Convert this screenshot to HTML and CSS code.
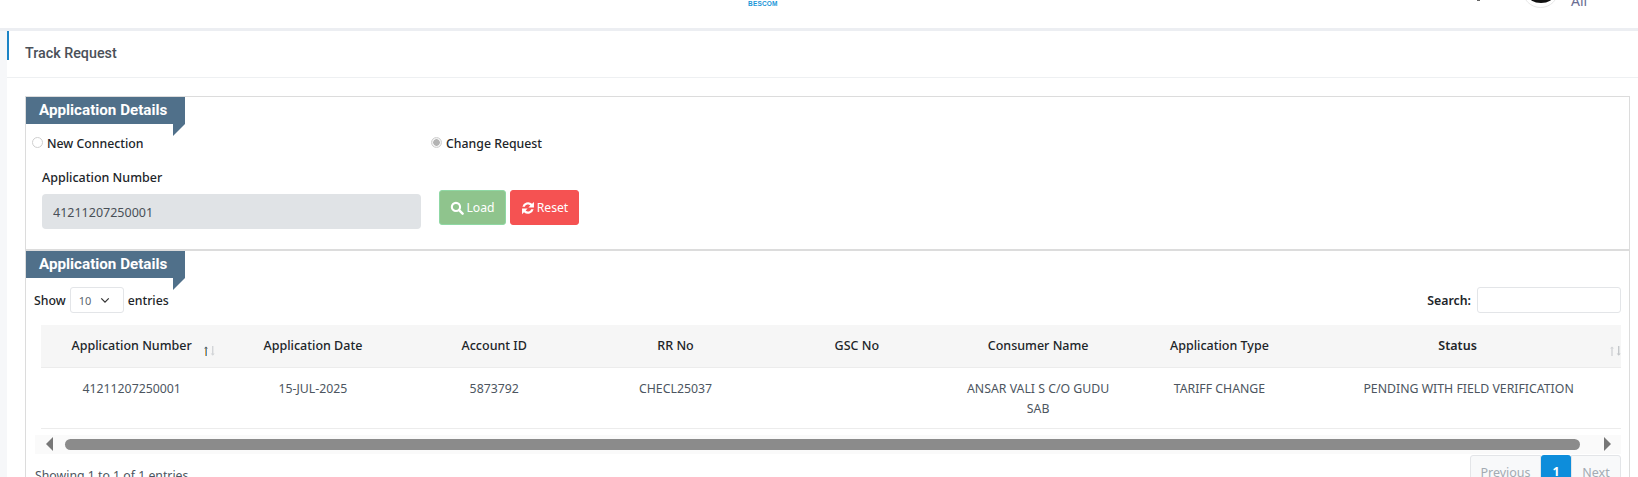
FILE: index.html
```html
<!DOCTYPE html>
<html lang="en">
<head>
<meta charset="utf-8">
<title>Track Request</title>
<link rel="stylesheet" href="styles.css">
</head>
<body>
<header class="topbar">
  <div class="logo">BESCOM</div>
  <div class="tick"></div>
  <div class="avatar"><span class="avatar-head"></span></div>
  <div class="user">All</div>
</header>
<main class="content">
  <div class="title">Track Request</div>
  <section class="panel panel-search">
    <h2 class="tab">Application Details</h2>
    <div class="radios">
      <label class="radio radio-new"><input type="radio" name="kind" disabled>New Connection</label>
      <label class="radio"><input type="radio" name="kind" checked disabled>Change Request</label>
    </div>
    <div class="form-row">
      <div class="field">
        <label class="field-label">Application Number</label>
        <input class="field-input" type="text" value="41211207250001" disabled>
      </div>
      <button class="btn btn-load" type="button">
        <svg class="btn-icon" viewBox="0 0 16 16"><circle cx="6.8" cy="6.8" r="4.7" fill="none" stroke="currentColor" stroke-width="2.4"/><path d="M10.4 10.4 14.4 14.4" stroke="currentColor" stroke-width="2.8" stroke-linecap="round"/></svg>Load
      </button>
      <button class="btn btn-reset" type="button">
        <svg class="btn-icon" viewBox="0 0 16 16"><path d="M1.6 6.6A6.6 6.6 0 0 1 12.6 3.2L14.8 1v6.4H8.4l2.3-2.3A3.9 3.9 0 0 0 4.3 6.6Z" fill="currentColor"/><path d="M14.4 9.4A6.6 6.6 0 0 1 3.4 12.8L1.2 15V8.6h6.4l-2.3 2.3a3.9 3.9 0 0 0 6.4-1.5Z" fill="currentColor"/></svg>Reset
      </button>
    </div>
  </section>
  <section class="panel panel-results">
    <h2 class="tab">Application Details</h2>
    <div class="controls">
      <div class="length">Show <span class="select"><span>10</span><svg class="chev" viewBox="0 0 12 8"><path d="M1.5 1.5 6 6l4.5-4.5" fill="none" stroke="currentColor" stroke-width="1.5"/></svg></span> entries</div>
      <div class="search">Search: <span class="search-input"></span></div>
    </div>
    <table class="grid">
      <colgroup>
        <col class="c1"><col class="c2"><col class="c3"><col class="c4"><col class="c5"><col class="c6"><col class="c7"><col class="c8">
      </colgroup>
      <thead>
        <tr>
          <th class="sortable">Application Number
            <svg class="sort sort-first" viewBox="0 0 12 10"><rect x="2" y="1" width="1" height="9" fill="#e5a54b"/><rect x="3" y="1" width="1" height="9" fill="#4f93d2"/><path d="M1 2.6 3 .4l2 2.2Z" fill="#5d6a75"/><rect x="9" y="0" width="1.4" height="9" fill="#d3d5d8"/><path d="M7.7 7.4 9.7 9.7l2-2.3Z" fill="#d3d5d8"/></svg>
          </th>
          <th>Application Date</th>
          <th>Account ID</th>
          <th>RR No</th>
          <th>GSC No</th>
          <th>Consumer Name</th>
          <th>Application Type</th>
          <th class="sortable status">Status
            <svg class="sort sort-last" viewBox="0 0 12 10"><rect x="2.3" y="1" width="1.4" height="9" fill="#d3d5d8"/><path d="M1 2.6 3 .4l2 2.2Z" fill="#d3d5d8"/><rect x="9" y="0" width="1.4" height="9" fill="#c4c7ca"/><path d="M7.7 7.4 9.7 9.7l2-2.3Z" fill="#c4c7ca"/></svg>
          </th>
        </tr>
      </thead>
      <tbody>
        <tr>
          <td>41211207250001</td>
          <td>15-JUL-2025</td>
          <td>5873792</td>
          <td>CHECL25037</td>
          <td></td>
          <td>ANSAR VALI S C/O GUDU SAB</td>
          <td>TARIFF CHANGE</td>
          <td class="status-cell">PENDING WITH FIELD VERIFICATION</td>
        </tr>
      </tbody>
    </table>
    <div class="scrollbar">
      <span class="arrow arrow-left"></span>
      <span class="thumb"></span>
      <span class="arrow arrow-right"></span>
    </div>
    <div class="footer">
      <div class="info">Showing 1 to 1 of 1 entries</div>
      <div class="pager">
        <span class="page page-prev">Previous</span>
        <span class="page page-current">1</span>
        <span class="page page-next">Next</span>
      </div>
    </div>
  </section>
</main>
</body>
</html>
```
FILE: styles.css
```css
* { box-sizing: border-box; }
html, body { margin: 0; height: 477px; overflow: hidden; }
body { background: #f6f7f9; font-family: "Noto Sans", sans-serif; font-size: 12.5px; color: #212529; }

.topbar { height: 31px; background: #fff; border-bottom: 3px solid #eceef2; display: flex; align-items: flex-end; overflow: hidden; }
.logo { margin-left: 748px; margin-bottom: 21px; font: 700 6.5px/6px "Liberation Sans", sans-serif; letter-spacing: 0.2px; color: #1a96d8; width: 33px; white-space: nowrap; }
.tick { margin-left: 696px; margin-bottom: 27px; width: 3px; height: 1px; background: #666; }
.avatar { margin-left: 42px; margin-bottom: 20px; width: 37px; height: 37px; flex: none; border: 1px solid #e8e8e8; border-radius: 50%; background: #fff; display: flex; justify-content: center; align-items: flex-end; overflow: hidden; padding-bottom: 4px; }
.avatar-head { width: 26px; height: 16px; border-radius: 50%; background: #111; }
.user { margin-left: 12px; margin-bottom: 20px; font: 14px/14px "Noto Sans", sans-serif; color: #6a6d92; }

.content { margin-left: 7px; background: #fff; height: 446px; overflow: hidden; }
.title { height: 47px; padding-left: 18px; border-bottom: 1px solid #eef0f2; background: linear-gradient(#1c84c6, #1c84c6) 0 0 / 2px 29px no-repeat; font: 500 14.3px/45px Roboto, sans-serif; color: #4a5058; }

.panel { margin: 18px 8px 0 18px; border: 1px solid #dcdcdc; border-bottom: 0; }
.panel-search { height: 153px; }
.panel-results { margin-top: 0; border-top: 2px solid #dcdcdc; height: 300px; }

.tab { position: relative; margin: 0; width: 159px; height: 27px; background: #50708a; color: #fff; font: 700 15.2px/27px Roboto, sans-serif; padding-left: 13px; }
.tab::after { content: ""; position: absolute; right: 0; top: 27px; width: 12px; height: 12px; background: #50708a; clip-path: polygon(0 0, 100% 0, 0 100%); }

.radios { display: flex; height: 38px; padding-left: 6px; }
.radio { display: flex; align-items: center; height: 38px; font-weight: 500; font-size: 12.3px; color: #212529; }
.radio-new { width: 399px; }
.radio input { appearance: none; margin: -1px 4px 0 0; width: 11px; height: 11px; border: 1px solid #cfcfcf; border-radius: 50%; background: #fff; }
.radio input:checked { background: radial-gradient(circle, #b4b4b4 0 3px, #f1f1f1 3.5px); }

.form-row { display: flex; align-items: flex-start; padding-left: 16px; }
.field { width: 379px; margin-right: 18px; }
.field-label { display: block; height: 18px; font-weight: 500; line-height: 18px; margin-top: 7px; margin-bottom: 7px; }
.field-input { display: block; width: 100%; height: 35px; border: 0; border-radius: 4px; background: #e0e3e6; color: #495057; padding: 1px 11px 0; font: 12.5px "Noto Sans", sans-serif; opacity: 1; }
.btn { display: inline-flex; align-items: center; justify-content: center; height: 35px; padding: 0; border-radius: 3px; color: #fff; font: 12.2px "Noto Sans", sans-serif; margin-top: 28px; }
.btn-load { width: 67px; margin-right: 4px; background: #8fc48d; border: 1px solid #8fd8a4; }
.btn-reset { width: 69px; background: #f55252; border: 1px solid #f55252; }
.btn-icon { width: 14px; height: 14px; margin-right: 2px; }

.controls { display: flex; justify-content: space-between; align-items: center; height: 26px; margin-top: 9px; padding: 0 8px; font-weight: 500; font-size: 12.3px; }
.length { display: flex; align-items: center; gap: 4px; }
.select { display: inline-flex; align-items: center; width: 54px; height: 26px; border: 1px solid #e3e5e8; border-radius: 3px; padding-left: 8px; font-weight: 400; font-size: 11px; color: #5d6670; }
.chev { width: 10px; height: 7px; margin-left: 9px; color: #333; }
.search { display: flex; align-items: center; gap: 6px; font-weight: 600; }
.search-input { width: 144px; height: 26px; border: 1px solid #e3e5e8; border-radius: 3px; }

.grid { width: 1580px; margin: 12px 0 0 15px; border-collapse: collapse; table-layout: fixed; }
.c1, .c2, .c3, .c4, .c5, .c6, .c7 { width: 181.3px; }
.c8 { width: 311px; }
.grid th { position: relative; height: 42px; background: #f6f6f6; border-bottom: 1px solid #ececec; font-weight: 500; color: #212529; text-align: center; padding: 1px 0 0; line-height: 18px; }
.grid th.status { padding-right: 16px; font-weight: 600; }
.grid td { height: 61px; padding: 11px 15px 0; vertical-align: top; text-align: center; line-height: 20px; font-size: 12.3px; color: #4c5560; border-bottom: 1px solid #ececec; }
.grid td.status-cell { padding-left: 21px; }
.sort { position: absolute; top: 21px; width: 12px; height: 10px; }
.sort-first { right: 7px; }
.sort-last { right: 0; }

.scrollbar { display: flex; align-items: center; height: 19px; margin: 6px 8px 0 9px; background: #fafafa; }
.thumb { width: 1515px; height: 11px; margin: 0 24px 0 12px; background: #8b8b8b; border-radius: 6px; }
.arrow { width: 0; height: 0; border-top: 7px solid transparent; border-bottom: 7px solid transparent; }
.arrow-left { margin-left: 11px; border-right: 7px solid #777; }
.arrow-right { border-left: 7px solid #777; }

.footer { display: flex; justify-content: space-between; align-items: flex-start; margin-top: 1px; padding: 0 8px 0 9px; }
.info { padding-top: 12px; color: #4c5560; font-size: 12.3px; line-height: 18px; }
.pager { display: flex; height: 40px; }
.page { display: block; height: 40px; border: 1px solid #e3e5e8; border-radius: 3px 0 0 3px; background: #f8f9fa; color: #a3abb3; line-height: 34px; text-align: center; }
.page-prev { width: 71px; }
.page-current { width: 30px; background: #0d8ddb; border: 0; border-radius: 3px 3px 0 0; color: #fff; font-weight: 700; }
.page-next { width: 50px; border-radius: 0 3px 3px 0; }
```
